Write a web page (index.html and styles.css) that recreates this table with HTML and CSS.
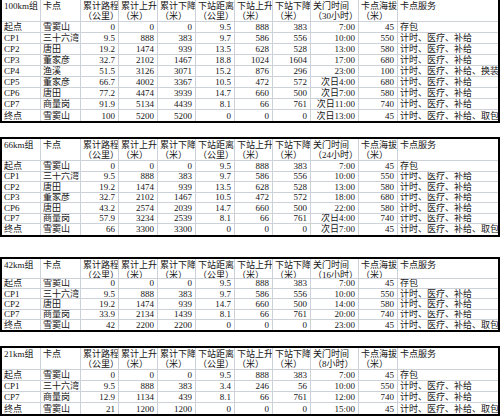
FILE: index.html
```html
<!DOCTYPE html>
<html lang="zh">
<head>
<meta charset="utf-8">
<link rel="stylesheet" href="styles.css">
</head>
<body>
<div class="sheets">

<div class="sheet t1">
<div class="h">100km组</div><div class="h">卡点</div><div class="h">累计路程<br>（公里）</div><div class="h">累计上升<br>（米）</div><div class="h">累计下降<br>（米）</div><div class="h">下站距离<br>（公里）</div><div class="h">下站上升<br>（米）</div><div class="h">下站下降<br>（米）</div><div class="h">关门时间<br>（30小时）</div><div class="h">卡点海拔<br>（米）</div><div class="h">卡点服务</div>
<div>起点</div><div>雪窦山</div><div class="n">0</div><div class="n">0</div><div class="n">0</div><div class="n">9.5</div><div class="n">888</div><div class="n">383</div><div class="n">7:00</div><div class="n">45</div><div>存包</div>
<div>CP1</div><div>三十六湾</div><div class="n">9.5</div><div class="n">888</div><div class="n">383</div><div class="n">9.7</div><div class="n">586</div><div class="n">556</div><div class="n">10:00</div><div class="n">550</div><div>计时、医疗、补给</div>
<div>CP2</div><div>唐田</div><div class="n">19.2</div><div class="n">1474</div><div class="n">939</div><div class="n">13.5</div><div class="n">628</div><div class="n">528</div><div class="n">13:00</div><div class="n">580</div><div>计时、医疗、补给</div>
<div>CP3</div><div>董家彦</div><div class="n">32.7</div><div class="n">2102</div><div class="n">1467</div><div class="n">18.8</div><div class="n">1024</div><div class="n">1604</div><div class="n">17:00</div><div class="n">680</div><div>计时、医疗、补给</div>
<div>CP4</div><div>渔溪</div><div class="n">51.5</div><div class="n">3126</div><div class="n">3071</div><div class="n">15.2</div><div class="n">876</div><div class="n">296</div><div class="n">23:00</div><div class="n">100</div><div>计时、医疗、补给、换装</div>
<div>CP5</div><div>董家彦</div><div class="n">66.7</div><div class="n">4002</div><div class="n">3367</div><div class="n">10.5</div><div class="n">472</div><div class="n">572</div><div class="n">次日4:00</div><div class="n">680</div><div>计时、医疗、补给</div>
<div>CP6</div><div>唐田</div><div class="n">77.2</div><div class="n">4474</div><div class="n">3939</div><div class="n">14.7</div><div class="n">660</div><div class="n">500</div><div class="n">次日7:00</div><div class="n">580</div><div>计时、医疗、补给</div>
<div>CP7</div><div>商量岗</div><div class="n">91.9</div><div class="n">5134</div><div class="n">4439</div><div class="n">8.1</div><div class="n">66</div><div class="n">761</div><div class="n">次日11:00</div><div class="n">740</div><div>计时、医疗、补给</div>
<div>终点</div><div>雪窦山</div><div class="n">100</div><div class="n">5200</div><div class="n">5200</div><div class="n">0</div><div class="n">0</div><div class="n">0</div><div class="n">次日13:00</div><div class="n">45</div><div>计时、医疗、补给、取包</div>
</div>

<div class="sheet t2">
<div class="h">66km组</div><div class="h">卡点</div><div class="h">累计路程<br>（公里）</div><div class="h">累计上升<br>（米）</div><div class="h">累计下降<br>（米）</div><div class="h">下站距离<br>（公里）</div><div class="h">下站上升<br>（米）</div><div class="h">下站下降<br>（米）</div><div class="h">关门时间<br>（24小时）</div><div class="h">卡点海拔<br>（米）</div><div class="h">卡点服务</div>
<div>起点</div><div>雪窦山</div><div class="n">0</div><div class="n">0</div><div class="n">0</div><div class="n">9.5</div><div class="n">888</div><div class="n">383</div><div class="n">7:00</div><div class="n">45</div><div>存包</div>
<div>CP1</div><div>三十六湾</div><div class="n">9.5</div><div class="n">888</div><div class="n">383</div><div class="n">9.7</div><div class="n">586</div><div class="n">556</div><div class="n">10:00</div><div class="n">550</div><div>计时、医疗、补给</div>
<div>CP2</div><div>唐田</div><div class="n">19.2</div><div class="n">1474</div><div class="n">939</div><div class="n">13.5</div><div class="n">628</div><div class="n">528</div><div class="n">13:00</div><div class="n">580</div><div>计时、医疗、补给</div>
<div>CP3</div><div>董家彦</div><div class="n">32.7</div><div class="n">2102</div><div class="n">1467</div><div class="n">10.5</div><div class="n">472</div><div class="n">572</div><div class="n">18:00</div><div class="n">680</div><div>计时、医疗、补给</div>
<div>CP6</div><div>唐田</div><div class="n">43.2</div><div class="n">2574</div><div class="n">2039</div><div class="n">14.7</div><div class="n">660</div><div class="n">500</div><div class="n">22:00</div><div class="n">580</div><div>计时、医疗、补给</div>
<div>CP7</div><div>商量岗</div><div class="n">57.9</div><div class="n">3234</div><div class="n">2539</div><div class="n">8.1</div><div class="n">66</div><div class="n">761</div><div class="n">次日4:00</div><div class="n">740</div><div>计时、医疗、补给</div>
<div>终点</div><div>雪窦山</div><div class="n">66</div><div class="n">3300</div><div class="n">3300</div><div class="n">0</div><div class="n">0</div><div class="n">0</div><div class="n">次日7:00</div><div class="n">45</div><div>计时、医疗、补给、取包</div>
</div>

<div class="sheet t3">
<div class="h">42km组</div><div class="h">卡点</div><div class="h">累计路程<br>（公里）</div><div class="h">累计上升<br>（米）</div><div class="h">累计下降<br>（米）</div><div class="h">下站距离<br>（公里）</div><div class="h">下站上升<br>（米）</div><div class="h">下站下降<br>（米）</div><div class="h">关门时间<br>（16小时）</div><div class="h">卡点海拔<br>（米）</div><div class="h">卡点服务</div>
<div>起点</div><div>雪窦山</div><div class="n">0</div><div class="n">0</div><div class="n">0</div><div class="n">9.5</div><div class="n">888</div><div class="n">383</div><div class="n">7:00</div><div class="n">45</div><div>存包</div>
<div>CP1</div><div>三十六湾</div><div class="n">9.5</div><div class="n">888</div><div class="n">383</div><div class="n">9.7</div><div class="n">586</div><div class="n">556</div><div class="n">10:00</div><div class="n">550</div><div>计时、医疗、补给</div>
<div>CP2</div><div>唐田</div><div class="n">19.2</div><div class="n">1474</div><div class="n">939</div><div class="n">14.7</div><div class="n">660</div><div class="n">500</div><div class="n">14:00</div><div class="n">580</div><div>计时、医疗、补给</div>
<div>CP7</div><div>商量岗</div><div class="n">33.9</div><div class="n">2134</div><div class="n">1439</div><div class="n">8.1</div><div class="n">66</div><div class="n">761</div><div class="n">20:00</div><div class="n">740</div><div>计时、医疗、补给</div>
<div>终点</div><div>雪窦山</div><div class="n">42</div><div class="n">2200</div><div class="n">2200</div><div class="n">0</div><div class="n">0</div><div class="n">0</div><div class="n">23:00</div><div class="n">45</div><div>计时、医疗、补给、取包</div>
</div>

<div class="sheet t4">
<div class="h">21km组</div><div class="h">卡点</div><div class="h">累计路程<br>（公里）</div><div class="h">累计上升<br>（米）</div><div class="h">累计下降<br>（米）</div><div class="h">下站距离<br>（公里）</div><div class="h">下站上升<br>（米）</div><div class="h">下站下降<br>（米）</div><div class="h">关门时间<br>（8小时）</div><div class="h">卡点海拔<br>（米）</div><div class="h">卡点服务</div>
<div>起点</div><div>雪窦山</div><div class="n">0</div><div class="n">0</div><div class="n">0</div><div class="n">9.5</div><div class="n">888</div><div class="n">383</div><div class="n">7:00</div><div class="n">45</div><div>存包</div>
<div>CP1</div><div>三十六湾</div><div class="n">9.5</div><div class="n">888</div><div class="n">383</div><div class="n">3.4</div><div class="n">246</div><div class="n">56</div><div class="n">10:00</div><div class="n">550</div><div>计时、医疗、补给</div>
<div>CP7</div><div>商量岗</div><div class="n">12.9</div><div class="n">1134</div><div class="n">439</div><div class="n">8.1</div><div class="n">66</div><div class="n">761</div><div class="n">12:00</div><div class="n">740</div><div>计时、医疗、补给</div>
<div>终点</div><div>雪窦山</div><div class="n">21</div><div class="n">1200</div><div class="n">1200</div><div class="n">0</div><div class="n">0</div><div class="n">0</div><div class="n">15:00</div><div class="n">45</div><div>计时、医疗、补给、取包</div>
</div>

</div>
</body>
</html>
```
FILE: styles.css
```css
html, body {
  margin: 0;
  padding: 0;
  background: #fff;
}

body {
  font-family: "Liberation Serif", "Noto Sans CJK SC", serif;
  font-size: 9px;
  color: #151515;
  width: 500px;
  height: 418px;
  overflow: hidden;
}

.sheets {
  display: flex;
  flex-direction: column;
  width: 500px;
}

.sheet {
  display: grid;
  grid-template-columns: 39px 40px 38px 39px 38px 39px 38px 38px 48px 39px 1fr;
  grid-template-rows: var(--hh);
  grid-auto-rows: var(--rh);
  width: 500px;
  box-sizing: border-box;
  border: 2px solid #000;
}

.sheet > div {
  box-sizing: border-box;
  display: flex;
  align-items: center;
  padding: 0 2px;
  border-right: 1px solid #cdd2da;
  border-bottom: 1px solid #cdd2da;
  line-height: 10px;
  white-space: nowrap;
  overflow: hidden;
  min-width: 0;
}

.sheet > div:nth-child(11n) {
  border-right: 0;
}

.sheet > div.h {
  align-items: flex-start;
  padding-top: 1px;
  display: block;
}

.sheet > div.n {
  justify-content: flex-end;
  padding-right: 3px;
}

/* table 1 : top edge is cropped */
.t1 { border-top-width: 0; --hh: 22px; --rh: 11px; }
.t1 > div:nth-last-child(-n+11) { border-bottom: 0; }

.t2 { margin-top: 14px; --hh: 22px; --rh: 10.5px; }
.t2 > div:nth-last-child(-n+11) { border-bottom: 0; }

.t3 { margin-top: 20px; --hh: 20px; --rh: 10.4px; }
.t3 > div:nth-last-child(-n+11) { border-bottom: 0; }

.t4 { margin-top: 14px; --hh: 22px; --rh: 11px; }
.t4 > div:nth-last-child(-n+11) { border-bottom: 0; }
```
